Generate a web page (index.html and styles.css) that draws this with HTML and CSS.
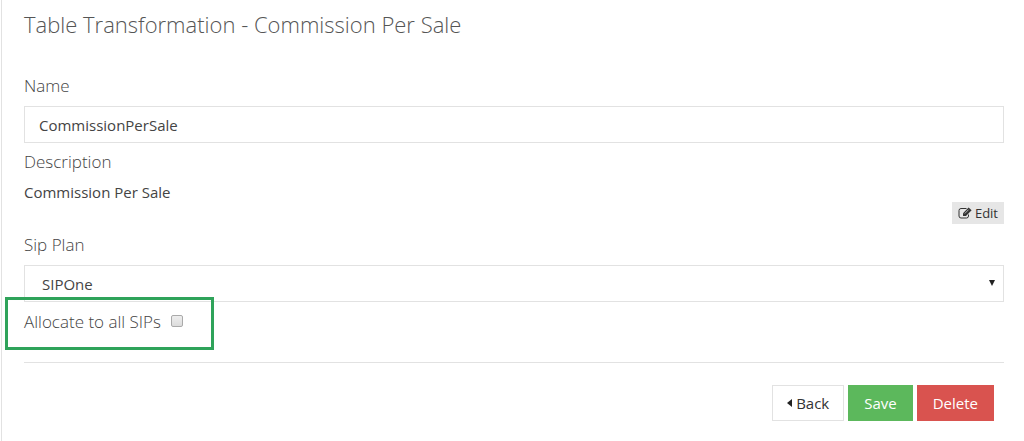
FILE: index.html
```
<!DOCTYPE html>
<html lang="en">
<head>
    <meta charset="utf-8">
    <title>Table Transformation - Commission Per Sale</title>
    <link rel="stylesheet" href="styles.css">
</head>
<body>
    <div class="panel">
        <h1>Table Transformation - Commission Per Sale</h1>
        <form>
            <label class="field-label" for="name">Name</label>
            <input type="text" id="name" class="form-control" value="CommissionPerSale">

            <div class="field-label description-label">Description</div>
            <p class="description">Commission Per Sale</p>
            <div class="edit-row">
                <button type="button" class="btn-edit">
                    <svg width="14" height="12" viewBox="0 0 14 12" fill="none" stroke="#333" aria-hidden="true">
                        <path d="M8.500 1.500H3Q1 1.500 1 3.500V9Q1 11 3 11H8.500Q10.500 11 10.500 9V7.500" />
                        <path d="M5 9V6.200L10.600 .4L13.600 3.200L8 9Z" fill="#333" stroke="none" />
                        <path d="M6.800 6.500L10.500 2.700" stroke="#e6e6e6" stroke-width=".7" />
                    </svg>
                    Edit
                </button>
            </div>

            <label class="field-label" for="sipPlan">Sip Plan</label>
            <div class="select-wrap">
                <select id="sipPlan" class="form-control">
                    <option>SIPOne</option>
                </select>
            </div>

            <div class="check-row">
                <label for="allSips">Allocate to all SIPs</label>
                <input type="checkbox" id="allSips">
            </div>

            <div class="actions">
                <button type="button" class="btn btn-back"><span class="caret"></span>Back</button>
                <button type="submit" class="btn btn-save">Save</button>
                <button type="button" class="btn btn-delete">Delete</button>
            </div>
        </form>
    </div>
</body>
</html>
```
FILE: styles.css
```
*,
*::before,
*::after {
    box-sizing: border-box;
}
body {
    margin: 0;
    background-color: #fff;
    color: #444;
    font-family: "Open Sans", sans-serif;
    font-size: 15px;
}
.panel {
    min-height: 100vh;
    margin-left: 1px;
    padding: 8px 20px 0 22px;
    border-left: 1px solid #e2e2e2;
}
h1 {
    margin: 0 0 30px;
    font-size: 22px;
    line-height: 32px;
    font-weight: 300;
    color: #555;
}
.field-label {
    display: block;
    height: 36px;
    font-size: 17px;
    line-height: 32px;
    font-weight: 300;
}
.form-control {
    display: block;
    width: 100%;
    height: 37px;
    padding: 0 14px;
    border: 1px solid #e2e2e2;
    border-radius: 0;
    background-color: #fff;
    color: #444;
    font-family: inherit;
    font-size: 15px;
}
.description-label {
    margin-top: 3px;
}
.description {
    margin: 0;
    line-height: 20px;
}
.edit-row {
    display: flex;
    justify-content: flex-end;
    margin-bottom: 5px;
}
.btn-edit {
    display: flex;
    align-items: center;
    gap: 3px;
    height: 22px;
    padding: 0 6px;
    border: none;
    background-color: #e6e6e6;
    color: #333;
    font-family: inherit;
    font-size: 13px;
}
.select-wrap {
    position: relative;
}
.select-wrap select {
    appearance: none;
    padding: 0 17px;
}
/* dropdown arrow */
.select-wrap::after {
    content: "";
    position: absolute;
    top: 15px;
    right: 9px;
    border: 3px solid transparent;
    border-top: 6px solid #222;
    border-bottom: none;
    pointer-events: none;
}
.check-row {
    position: relative;
    display: flex;
    align-items: center;
    gap: 10px;
    height: 61px;
    padding-bottom: 22px;
    border-bottom: 1px solid #e2e2e2;
    font-size: 17px;
    font-weight: 300;
}
/* green highlight around the option */
.check-row::after {
    content: "";
    position: absolute;
    top: -5px;
    left: -19px;
    width: 209px;
    height: 53px;
    border: 3px solid #2fa35a;
    pointer-events: none;
}
.check-row input {
    appearance: none;
    width: 12px;
    height: 12px;
    margin: 0;
    border: 1px solid #aaa;
    border-radius: 2px;
    background: linear-gradient(#eee, #dcdcdc);
}
.check-row input:checked {
    background: #2fa35a;
}
.actions {
    display: flex;
    justify-content: flex-end;
    gap: 4px;
    padding: 22px 10px 20px 0;
}
.btn {
    height: 36px;
    padding: 0 15px;
    border: 1px solid transparent;
    color: #fff;
    font-family: inherit;
    font-size: 15px;
    cursor: pointer;
}
.btn-back {
    display: flex;
    align-items: center;
    gap: 4px;
    padding: 0 14px;
    border-color: #e2e2e2;
    background-color: #fff;
    color: #333;
}
.caret {
    border: 4px solid transparent;
    border-right: 5px solid #222;
    border-left: none;
}
.btn-save {
    background-color: #5cb85c;
}
.btn-delete {
    background-color: #d9534f;
}
```
